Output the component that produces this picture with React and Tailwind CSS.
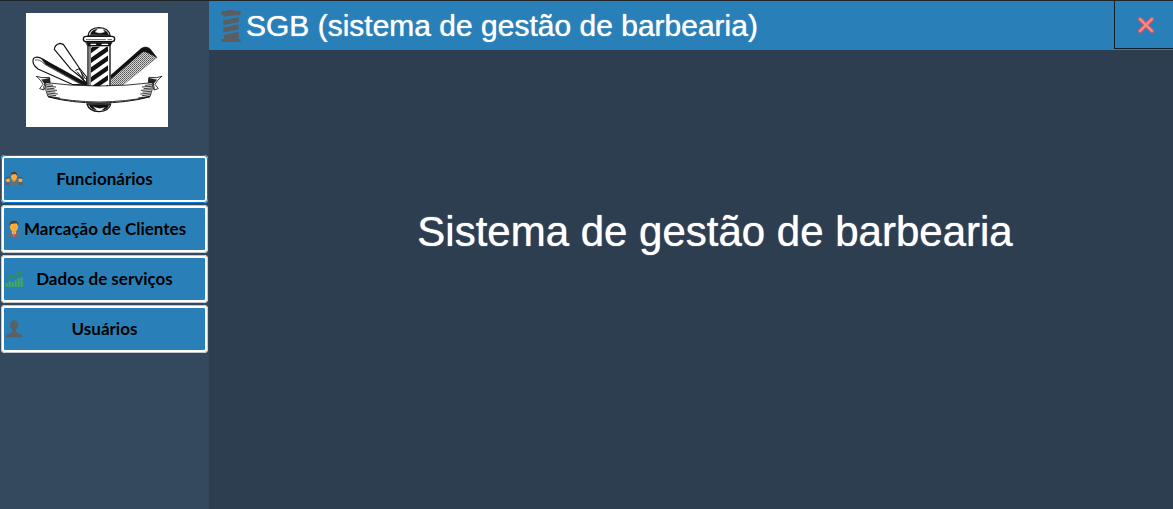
import React from 'react';

function BarbershopLogo() {
  return (
    <svg viewBox="18 15 426 342" className="h-[114px] w-[142px] bg-white" role="img" aria-label="Barbearia">
      <defs>
        <clipPath id="pole">
          <path d="M213 116H264V236H213Z" />
        </clipPath>
        <pattern id="teeth" width="6" height="6" patternUnits="userSpaceOnUse">
          <rect width="6" height="6" fill="#d4d4d4" />
          <rect width="3" height="3" fill="#555" />
          <rect x="3" y="3" width="3" height="3" fill="#777" />
        </pattern>
      </defs>
      <g strokeLinejoin="round" strokeLinecap="round" stroke="#111" fill="#fff">
        <path d="M200 231L68 153Q50 142 40 152Q34 168 54 183L156 229Z" strokeWidth="3.5" />
        <path d="M46 156Q60 152 74 169L180 228" strokeWidth="2" fill="none" />
        <path d="M66 153L130 187L200 226V231L184 228L76 168Z" strokeWidth="2" fill="#111" />
        <path d="M103 124Q104 110 120 106L130 109L178 180L200 207V228L182 207L153 184Z" strokeWidth="3.5" />
        <path d="M167 187L179 181M178 184L196 212M172 192L200 226M184 194L190 212" strokeWidth="3" fill="none" />
        <path d="M272 209L365 121Q378 113 388 122L411 149L309 231H272Z" fill="url(#teeth)" stroke="#666" strokeWidth="1" />
        <path d="M272 202L364 121Q380 112 391 123L411 149L402 144L378 132Q371 129 364 135L274 212Z" fill="#111" strokeWidth="1" />
        <path d="M204 112H270V242H204Z" strokeWidth="4" />
        <path d="M210 114V236" strokeWidth="3" />
        <g clipPath="url(#pole)" stroke="#111" strokeWidth="13" strokeLinecap="butt">
          <path d="M200 137L250 101M200 166L278 112M200 195L278 141M200 224L278 170M200 253L278 199M210 275L278 228" />
        </g>
        <path d="M204 84Q207 60 237 59Q267 60 271 84Z" strokeWidth="4" />
        <path d="M211 80Q213 66 232 64L224 72Q240 80 255 72L250 65Q264 70 266 81Z" fill="#111" strokeWidth="1" />
        <rect x="190" y="85" width="94" height="16" rx="8" strokeWidth="4" />
        <path d="M199 95H256M264 95H275" strokeWidth="2" />
        <path d="M198 103H276L270 114H204Z" fill="#111" strokeWidth="2" />
        <path d="M213 109H227M246 109H263" stroke="#fff" strokeWidth="4" />
        <path d="M201 288H272Q268 309 237 311Q207 309 201 288Z" strokeWidth="4" />
        <path d="M207 290H267Q264 304 246 307L256 298Q235 304 218 295L229 306Q211 303 207 290Z" fill="#111" strokeWidth="1" />
        <path d="M50 205L66 209L88 208L90 226L78 231L72 246L59 242L69 229Q64 218 50 205Z" strokeWidth="2.5" />
        <path d="M425 205L409 209L387 208L385 226L397 231L402 246L415 242L405 229Q411 218 425 205Z" strokeWidth="2.5" />
        <path d="M65 215L90 210V224L76 226L69 245L73 227ZM410 215L386 210V224L398 226L404 245L401 227Z" fill="#222" strokeWidth="1" />
        <path d="M77 224Q154 234 237 234Q320 234 397 224Q399 246 390 266Q320 281 237 282Q154 281 84 266Q74 246 77 224Z" strokeWidth="2.5" />
        <path d="M86 267Q154 285 237 285Q320 285 388 267" strokeWidth="3" fill="none" />
        <path d="M80 230L98 232M80 235L107 237M80 240L102 242M81 245L110 247M82 250L105 252M83 255L112 258M84 260L107 263M86 265L119 270M394 230L376 232M394 235L367 237M394 240L372 242M393 245L364 247M392 250L369 252M391 255L362 258M390 260L367 263M388 265L355 270" fill="none" strokeWidth="2.5" />
      </g>
    </svg>
  );
}

function TeamIcon() {
  return (
    <svg viewBox="0 0 54 54" className="size-[18px]" aria-hidden="true">
      <path d="M0 45Q0 37 9 35H45Q54 37 54 45Z" fill="#4d6472" />
      <path d="M13 45V38Q15 31 23 29H33Q40 32 41 38V45Z" fill="#5c7480" />
      <path d="M23 26H32V32L27 36L22 32Z" fill="#e99324" />
      <ellipse cx="27" cy="19" rx="9" ry="12" fill="#ffa937" />
      <path d="M17 18Q16 5 27 5Q38 5 37 18L33 13H22Z" fill="#4b403d" />
      <ellipse cx="9" cy="30" rx="6" ry="7" fill="#ffa937" />
      <ellipse cx="46" cy="30" rx="6" ry="7" fill="#ffa937" />
      <path d="M3 27Q2 21 9 21Q16 21 15 27L11 25ZM40 27Q39 21 46 21Q53 21 52 27L47 25Z" fill="#5b4638" />
    </svg>
  );
}

function ClientIcon() {
  return (
    <svg viewBox="0 0 54 54" className="size-[18px]" aria-hidden="true">
      <path d="M7 51V45Q9 38 20 35H34Q45 38 47 45V51Z" fill="#5c7480" />
      <path d="M20 35L27 51L34 35Z" fill="#f3e5f5" />
      <path d="M25 40H29L31 51H24Z" fill="#d95362" />
      <path d="M21 29H33V36L27 41L21 36Z" fill="#f29a25" />
      <ellipse cx="27" cy="20" rx="12" ry="15" fill="#ffac38" />
      <path d="M14 17Q12 2 27 2Q42 2 40 17L35 10L18 12Z" fill="#49413e" />
    </svg>
  );
}

function ChartIcon() {
  return (
    <svg viewBox="0 0 54 54" className="size-[18px]" aria-hidden="true">
      <path d="M2 39H8V51H2ZM11 34H17V51H11ZM20 37H26V51H20ZM29 31H35V51H29ZM38 25H44V51H38ZM47 22H53V51H47Z" fill="#43ac58" />
      <path d="M4 30L17 17L26 23L45 10" fill="none" stroke="#31914f" strokeWidth="5" />
      <path d="M37 5L51 4V19Z" fill="#31914f" />
    </svg>
  );
}

function UserIcon() {
  return (
    <svg viewBox="0 0 54 54" className="size-[18px]" fill="#5b6064" aria-hidden="true">
      <path d="M16 13Q16 1 27 1Q39 1 38 15Q41 18 37 23Q36 28 33 31V35Q35 39 44 41Q52 43 52 52H3Q3 43 11 41Q20 39 22 35V31Q18 28 17 23Q14 18 16 13Z" />
    </svg>
  );
}

function PoleIcon() {
  return (
    <svg viewBox="0 0 66 100" className="h-[34px] w-[22px]" fill="#5b5d60" aria-hidden="true">
      <path d="M4 5H21V2H43V5H62V17H54L10 22V18L4 16ZM56 24V38L10 48V33ZM56 45V60L10 70V55ZM56 67V83L12 89V77ZM4 98V90L55 83V90H62V98Z" />
    </svg>
  );
}

const items = [
  { label: 'Funcionários', Icon: TeamIcon },
  { label: 'Marcação de Clientes', Icon: ClientIcon },
  { label: 'Dados de serviços', Icon: ChartIcon },
  { label: 'Usuários', Icon: UserIcon },
];

function NavButton({ label, Icon, active }) {
  return (
    <button
      type="button"
      className={`flex h-12 w-full items-center rounded-sm border-3 border-white bg-[#2980b9] font-['Lato',sans-serif] text-[17px] leading-6 font-bold text-black outline-1 -outline-offset-1 ${active ? 'outline-[#0078d7]' : 'outline-[#c5c9ce]'}`}
    >
      <span className="flex w-5 shrink-0 justify-center"><Icon /></span>
      <span className="shrink-0 grow text-center whitespace-nowrap">{label}</span>
      <span className="w-5" />
    </button>
  );
}

export default function App() {
  return (
    <div className="flex min-h-screen border-t border-[#20252a] bg-[#2d3e50] font-['Liberation_Sans',Arial,sans-serif] text-white">
      <aside className="flex w-[209px] shrink-0 flex-col bg-[#34495e] pt-3">
        <div className="pl-[26px]">
          <BarbershopLogo />
        </div>
        <nav className="mt-7 flex flex-col gap-[2px] px-px" aria-label="Menu principal">
          {items.map((item, i) => (
            <NavButton key={item.label} {...item} active={i === 0} />
          ))}
        </nav>
      </aside>
      <div className="flex min-w-0 grow flex-col">
        <header className="flex h-[49px] items-start justify-between bg-[#2980b9]">
          <div className="flex h-full items-center gap-1 pl-[11px]">
            <PoleIcon />
            <h1 className="text-[30px] leading-9 whitespace-nowrap [text-shadow:0_0_1px_white]">SGB (sistema de gestão de barbearia)</h1>
          </div>
          <button type="button" aria-label="Fechar" className="flex h-12 w-[59px] items-center justify-center border-b border-l border-[#10202d] pl-1">
            <svg viewBox="0 0 18 18" className="size-[18px]" fill="none" strokeLinecap="round" aria-hidden="true">
              <path d="M3 3L15 15M15 3L3 15" stroke="#e05a60" strokeWidth="4" />
              <path d="M3 3L15 15M15 3L3 15" stroke="#ff8a85" strokeWidth="2" />
            </svg>
          </button>
        </header>
        <main className="pt-[158px] pl-12 text-center">
          <h2 className="text-[42px] leading-12 [text-shadow:0_0_1px_white]">Sistema de gestão de barbearia</h2>
        </main>
      </div>
    </div>
  );
}
